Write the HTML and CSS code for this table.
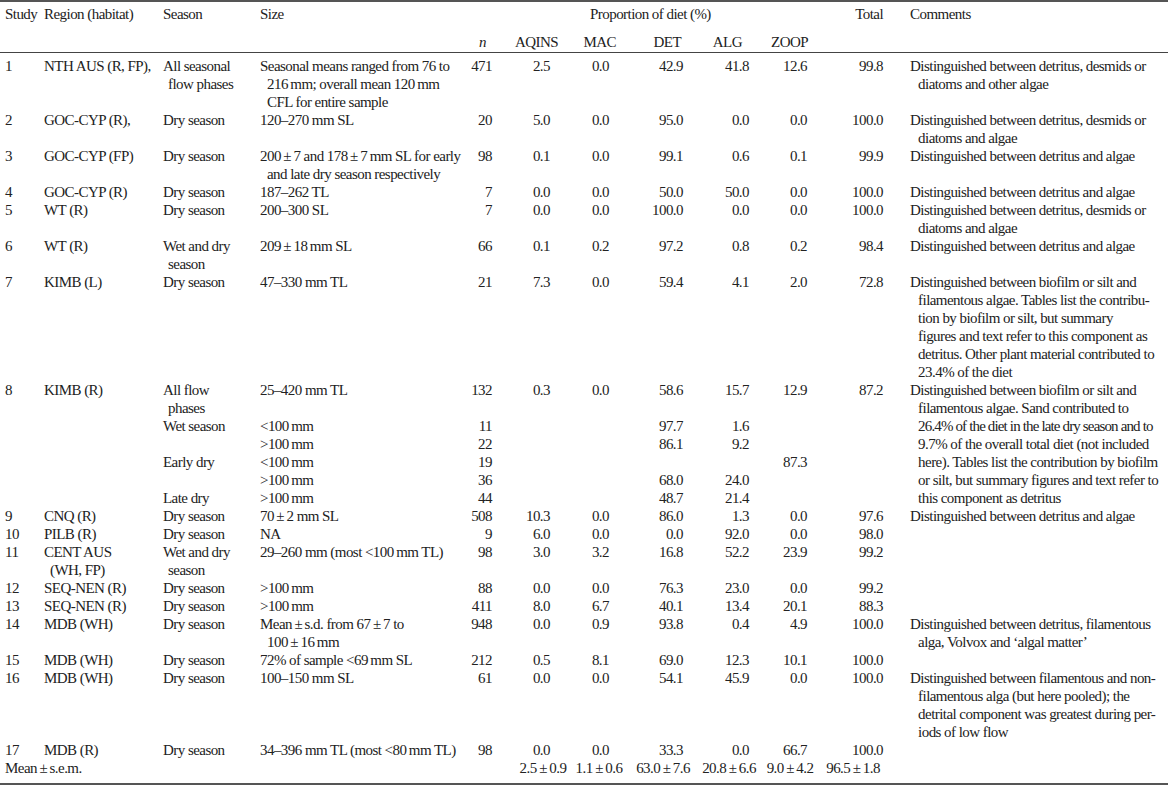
FILE: index.html
```html
<!DOCTYPE html>
<html>
<head>
<meta charset="utf-8">
<title>Proportion of diet</title>
<link rel="stylesheet" href="styles.css">
</head>
<body>
<table class="diet">
<colgroup>
<col class="c-study"><col class="c-region"><col class="c-season"><col class="c-size"><col class="c-n"><col class="c-aq"><col class="c-mac"><col class="c-det"><col class="c-alg"><col class="c-zoop"><col class="c-tot"><col class="c-com">
</colgroup>
<thead>
<tr class="h1">
<th rowspan="2" class="study">Study</th>
<th rowspan="2" class="region">Region (habitat)</th>
<th rowspan="2" class="season">Season</th>
<th rowspan="2" class="size">Size</th>
<th colspan="6" class="prop">Proportion of diet (%)</th>
<th rowspan="2" class="hr h-tot">Total</th>
<th rowspan="2" class="com">Comments</th>
</tr>
<tr class="h2">
<th class="hr h-n"><i>n</i></th>
<th class="hr h-aq">AQINS</th>
<th class="hr h-mac">MAC</th>
<th class="hr h-det">DET</th>
<th class="hr h-alg">ALG</th>
<th class="hr h-zoop">ZOOP</th>
</tr>
</thead>
<tbody>
<tr class="first">
<td class="study">1</td><td class="region">NTH&thinsp;AUS (R, FP),</td><td class="season hang">All seasonal<br>flow phases</td><td class="size hang">Seasonal means ranged from 76 to<br>216&thinsp;mm; overall mean 120&thinsp;mm<br>CFL for entire sample</td>
<td class="r">471</td><td class="r">2.5</td><td class="r">0.0</td><td class="r">42.9</td><td class="r">41.8</td><td class="r">12.6</td><td class="r">99.8</td>
<td class="com hang">Distinguished between detritus, desmids or<br>diatoms and other algae</td>
</tr>
<tr>
<td class="study">2</td><td class="region">GOC-CYP (R),</td><td class="season">Dry season</td><td class="size">120–270 mm SL</td>
<td class="r">20</td><td class="r">5.0</td><td class="r">0.0</td><td class="r">95.0</td><td class="r">0.0</td><td class="r">0.0</td><td class="r">100.0</td>
<td class="com hang">Distinguished between detritus, desmids or<br>diatoms and algae</td>
</tr>
<tr>
<td class="study">3</td><td class="region">GOC-CYP (FP)</td><td class="season">Dry season</td><td class="size hang">200&thinsp;±&thinsp;7 and 178&thinsp;±&thinsp;7&thinsp;mm SL for early<br>and late dry season respectively</td>
<td class="r">98</td><td class="r">0.1</td><td class="r">0.0</td><td class="r">99.1</td><td class="r">0.6</td><td class="r">0.1</td><td class="r">99.9</td>
<td class="com hang">Distinguished between detritus and algae</td>
</tr>
<tr>
<td class="study">4</td><td class="region">GOC-CYP (R)</td><td class="season">Dry season</td><td class="size">187–262 TL</td>
<td class="r">7</td><td class="r">0.0</td><td class="r">0.0</td><td class="r">50.0</td><td class="r">50.0</td><td class="r">0.0</td><td class="r">100.0</td>
<td class="com hang">Distinguished between detritus and algae</td>
</tr>
<tr>
<td class="study">5</td><td class="region">WT (R)</td><td class="season">Dry season</td><td class="size">200–300 SL</td>
<td class="r">7</td><td class="r">0.0</td><td class="r">0.0</td><td class="r">100.0</td><td class="r">0.0</td><td class="r">0.0</td><td class="r">100.0</td>
<td class="com hang">Distinguished between detritus, desmids or<br>diatoms and algae</td>
</tr>
<tr>
<td class="study">6</td><td class="region">WT (R)</td><td class="season hang">Wet and dry<br>season</td><td class="size">209&thinsp;±&thinsp;18&thinsp;mm SL</td>
<td class="r">66</td><td class="r">0.1</td><td class="r">0.2</td><td class="r">97.2</td><td class="r">0.8</td><td class="r">0.2</td><td class="r">98.4</td>
<td class="com hang">Distinguished between detritus and algae</td>
</tr>
<tr>
<td class="study">7</td><td class="region">KIMB (L)</td><td class="season">Dry season</td><td class="size">47–330 mm TL</td>
<td class="r">21</td><td class="r">7.3</td><td class="r">0.0</td><td class="r">59.4</td><td class="r">4.1</td><td class="r">2.0</td><td class="r">72.8</td>
<td class="com hang">Distinguished between biofilm or silt and<br>filamentous algae. Tables list the contribu-<br>tion by biofilm or silt, but summary<br>figures and text refer to this component as<br>detritus. Other plant material contributed to<br>23.4% of the diet</td>
</tr>
<tr>
<td class="study" rowspan="6">8</td><td class="region" rowspan="6">KIMB (R)</td><td class="season hang">All flow<br>phases</td><td class="size">25–420 mm TL</td>
<td class="r">132</td><td class="r">0.3</td><td class="r">0.0</td><td class="r">58.6</td><td class="r">15.7</td><td class="r">12.9</td><td class="r">87.2</td>
<td class="com hang" rowspan="6">Distinguished between biofilm or silt and<br>filamentous algae. Sand contributed to<br><span class="tight">26.4% of the diet in the late dry season and to</span><br>9.7% of the overall total diet (not included<br>here). Tables list the contribution by biofilm<br>or silt, but summary figures and text refer to<br>this component as detritus</td>
</tr>
<tr>
<td class="season">Wet season</td><td class="size">&lt;100&thinsp;mm</td>
<td class="r">11</td><td class="r"></td><td class="r"></td><td class="r">97.7</td><td class="r">1.6</td><td class="r"></td><td class="r"></td>
</tr>
<tr>
<td class="season"></td><td class="size">&gt;100&thinsp;mm</td>
<td class="r">22</td><td class="r"></td><td class="r"></td><td class="r">86.1</td><td class="r">9.2</td><td class="r"></td><td class="r"></td>
</tr>
<tr>
<td class="season">Early dry</td><td class="size">&lt;100&thinsp;mm</td>
<td class="r">19</td><td class="r"></td><td class="r"></td><td class="r"></td><td class="r"></td><td class="r">87.3</td><td class="r"></td>
</tr>
<tr>
<td class="season"></td><td class="size">&gt;100&thinsp;mm</td>
<td class="r">36</td><td class="r"></td><td class="r"></td><td class="r">68.0</td><td class="r">24.0</td><td class="r"></td><td class="r"></td>
</tr>
<tr>
<td class="season">Late dry</td><td class="size">&gt;100&thinsp;mm</td>
<td class="r">44</td><td class="r"></td><td class="r"></td><td class="r">48.7</td><td class="r">21.4</td><td class="r"></td><td class="r"></td>
</tr>
<tr>
<td class="study">9</td><td class="region">CNQ (R)</td><td class="season">Dry season</td><td class="size">70&thinsp;±&thinsp;2 mm SL</td>
<td class="r">508</td><td class="r">10.3</td><td class="r">0.0</td><td class="r">86.0</td><td class="r">1.3</td><td class="r">0.0</td><td class="r">97.6</td>
<td class="com hang">Distinguished between detritus and algae</td>
</tr>
<tr>
<td class="study">10</td><td class="region">PILB (R)</td><td class="season">Dry season</td><td class="size">NA</td>
<td class="r">9</td><td class="r">6.0</td><td class="r">0.0</td><td class="r">0.0</td><td class="r">92.0</td><td class="r">0.0</td><td class="r">98.0</td>
<td class="com"></td>
</tr>
<tr>
<td class="study">11</td><td class="region hang">CENT AUS<br>(WH, FP)</td><td class="season hang">Wet and dry<br>season</td><td class="size">29–260 mm (most &lt;100&thinsp;mm TL)</td>
<td class="r">98</td><td class="r">3.0</td><td class="r">3.2</td><td class="r">16.8</td><td class="r">52.2</td><td class="r">23.9</td><td class="r">99.2</td>
<td class="com"></td>
</tr>
<tr>
<td class="study">12</td><td class="region">SEQ-NEN (R)</td><td class="season">Dry season</td><td class="size">&gt;100&thinsp;mm</td>
<td class="r">88</td><td class="r">0.0</td><td class="r">0.0</td><td class="r">76.3</td><td class="r">23.0</td><td class="r">0.0</td><td class="r">99.2</td>
<td class="com"></td>
</tr>
<tr>
<td class="study">13</td><td class="region">SEQ-NEN (R)</td><td class="season">Dry season</td><td class="size">&gt;100&thinsp;mm</td>
<td class="r">411</td><td class="r">8.0</td><td class="r">6.7</td><td class="r">40.1</td><td class="r">13.4</td><td class="r">20.1</td><td class="r">88.3</td>
<td class="com"></td>
</tr>
<tr>
<td class="study">14</td><td class="region">MDB (WH)</td><td class="season">Dry season</td><td class="size hang">Mean&thinsp;±&thinsp;s.d. from 67&thinsp;±&thinsp;7 to<br>100&thinsp;±&thinsp;16&thinsp;mm</td>
<td class="r">948</td><td class="r">0.0</td><td class="r">0.9</td><td class="r">93.8</td><td class="r">0.4</td><td class="r">4.9</td><td class="r">100.0</td>
<td class="com hang">Distinguished between detritus, filamentous<br>alga, Volvox and ‘algal matter’</td>
</tr>
<tr>
<td class="study">15</td><td class="region">MDB (WH)</td><td class="season">Dry season</td><td class="size">72% of sample &lt;69&thinsp;mm SL</td>
<td class="r">212</td><td class="r">0.5</td><td class="r">8.1</td><td class="r">69.0</td><td class="r">12.3</td><td class="r">10.1</td><td class="r">100.0</td>
<td class="com"></td>
</tr>
<tr>
<td class="study">16</td><td class="region">MDB (WH)</td><td class="season">Dry season</td><td class="size">100–150 mm SL</td>
<td class="r">61</td><td class="r">0.0</td><td class="r">0.0</td><td class="r">54.1</td><td class="r">45.9</td><td class="r">0.0</td><td class="r">100.0</td>
<td class="com hang">Distinguished between filamentous and non-<br>filamentous alga (but here pooled); the<br>detrital component was greatest during per-<br>iods of low flow</td>
</tr>
<tr>
<td class="study">17</td><td class="region">MDB (R)</td><td class="season">Dry season</td><td class="size">34–396 mm TL (most &lt;80&thinsp;mm TL)</td>
<td class="r">98</td><td class="r">0.0</td><td class="r">0.0</td><td class="r">33.3</td><td class="r">0.0</td><td class="r">66.7</td><td class="r">100.0</td>
<td class="com"></td>
</tr>
<tr class="mean">
<td class="study" colspan="5">Mean&thinsp;±&thinsp;s.e.m.</td>
<td><div class="mv m-aq">2.5&thinsp;±&thinsp;0.9</div></td>
<td><div class="mv m-mac">1.1&thinsp;±&thinsp;0.6</div></td>
<td><div class="mv m-det">63.0&thinsp;±&thinsp;7.6</div></td>
<td><div class="mv m-alg">20.8&thinsp;±&thinsp;6.6</div></td>
<td><div class="mv m-zoop">9.0&thinsp;±&thinsp;4.2</div></td>
<td><div class="mv m-tot">96.5&thinsp;±&thinsp;1.8</div></td>
<td class="com"></td>
</tr>
</tbody>
</table>
</body>
</html>
```

FILE: styles.css
```css
html, body {
  margin: 0;
  padding: 0;
  background: #ffffff;
}

body {
  font-family: "Liberation Serif", "Times New Roman", serif;
  font-size: 15px;
  color: #222222;
  letter-spacing: -0.55px;
}

.diet {
  border-collapse: separate;
  border-spacing: 0;
  table-layout: fixed;
  width: 1168px;
  border-top: 2px solid #555555;
  border-bottom: 2px solid #555555;
}

.c-study { width: 40px; }
.c-region { width: 118px; }
.c-season { width: 98px; }
.c-size { width: 206px; }
.c-n { width: 38px; }
.c-aq { width: 58px; }
.c-mac { width: 59px; }
.c-det { width: 74px; }
.c-alg { width: 66px; }
.c-zoop { width: 58px; }
.c-tot { width: 76px; }
.c-com { width: 277px; }

.diet th,
.diet td {
  padding: 0;
  line-height: 18px;
  white-space: nowrap;
  vertical-align: top;
  text-align: left;
  font-weight: normal;
}

/* header */
.h1 th { padding-top: 3px; }
.h2 th { padding-top: 10px; padding-bottom: 1px; }
.diet thead th { border-bottom: 1px solid #444444; }
.diet thead th.prop { border-bottom: 0; padding-left: 128px; }

.hr { text-align: right; }
.diet th.h-n { text-align: right; padding-right: 14px; }
.diet th.h-aq { text-align: right; padding-right: 0; }
.diet th.h-mac { text-align: right; padding-right: 1px; }
.diet th.h-det { text-align: right; padding-right: 10px; }
.diet th.h-alg { text-align: right; padding-right: 15px; }
.diet th.h-zoop { text-align: right; padding-right: 7px; }
.diet th.h-tot { text-align: right; padding-right: 8px; }

/* body columns */
.diet tbody tr.first td { padding-top: 4px; }

.diet .study { padding-left: 5px; }
.diet .region { padding-left: 4px; }
.diet .season { padding-left: 5px; }
.diet .size { padding-left: 4px; }
.diet .com { padding-left: 19px; }

.diet td.r { text-align: right; padding-right: 8px; }

.diet td.region.hang { padding-left: 10px; text-indent: -6px; }
.diet td.season.hang { padding-left: 10px; text-indent: -5px; }
.diet td.size.hang { padding-left: 11px; text-indent: -7px; }
.diet td.com.hang { padding-left: 27px; text-indent: -8px; }

.tight { letter-spacing: -0.85px; }

/* mean row */
.diet tr.mean td { padding-bottom: 6px; }
.mv { text-align: center; }
.m-aq { margin: 0 -36px 0 -8px; }
.m-mac { margin: 0 -33px 0 -10px; }
.m-det { margin: 0 -30px 0 -12px; }
.m-alg { margin: 0 -25px 0 -15px; }
.m-zoop { margin: 0 -24px 0 -16px; }
.m-tot { margin: 0 -20px 0 -20px; }
```
